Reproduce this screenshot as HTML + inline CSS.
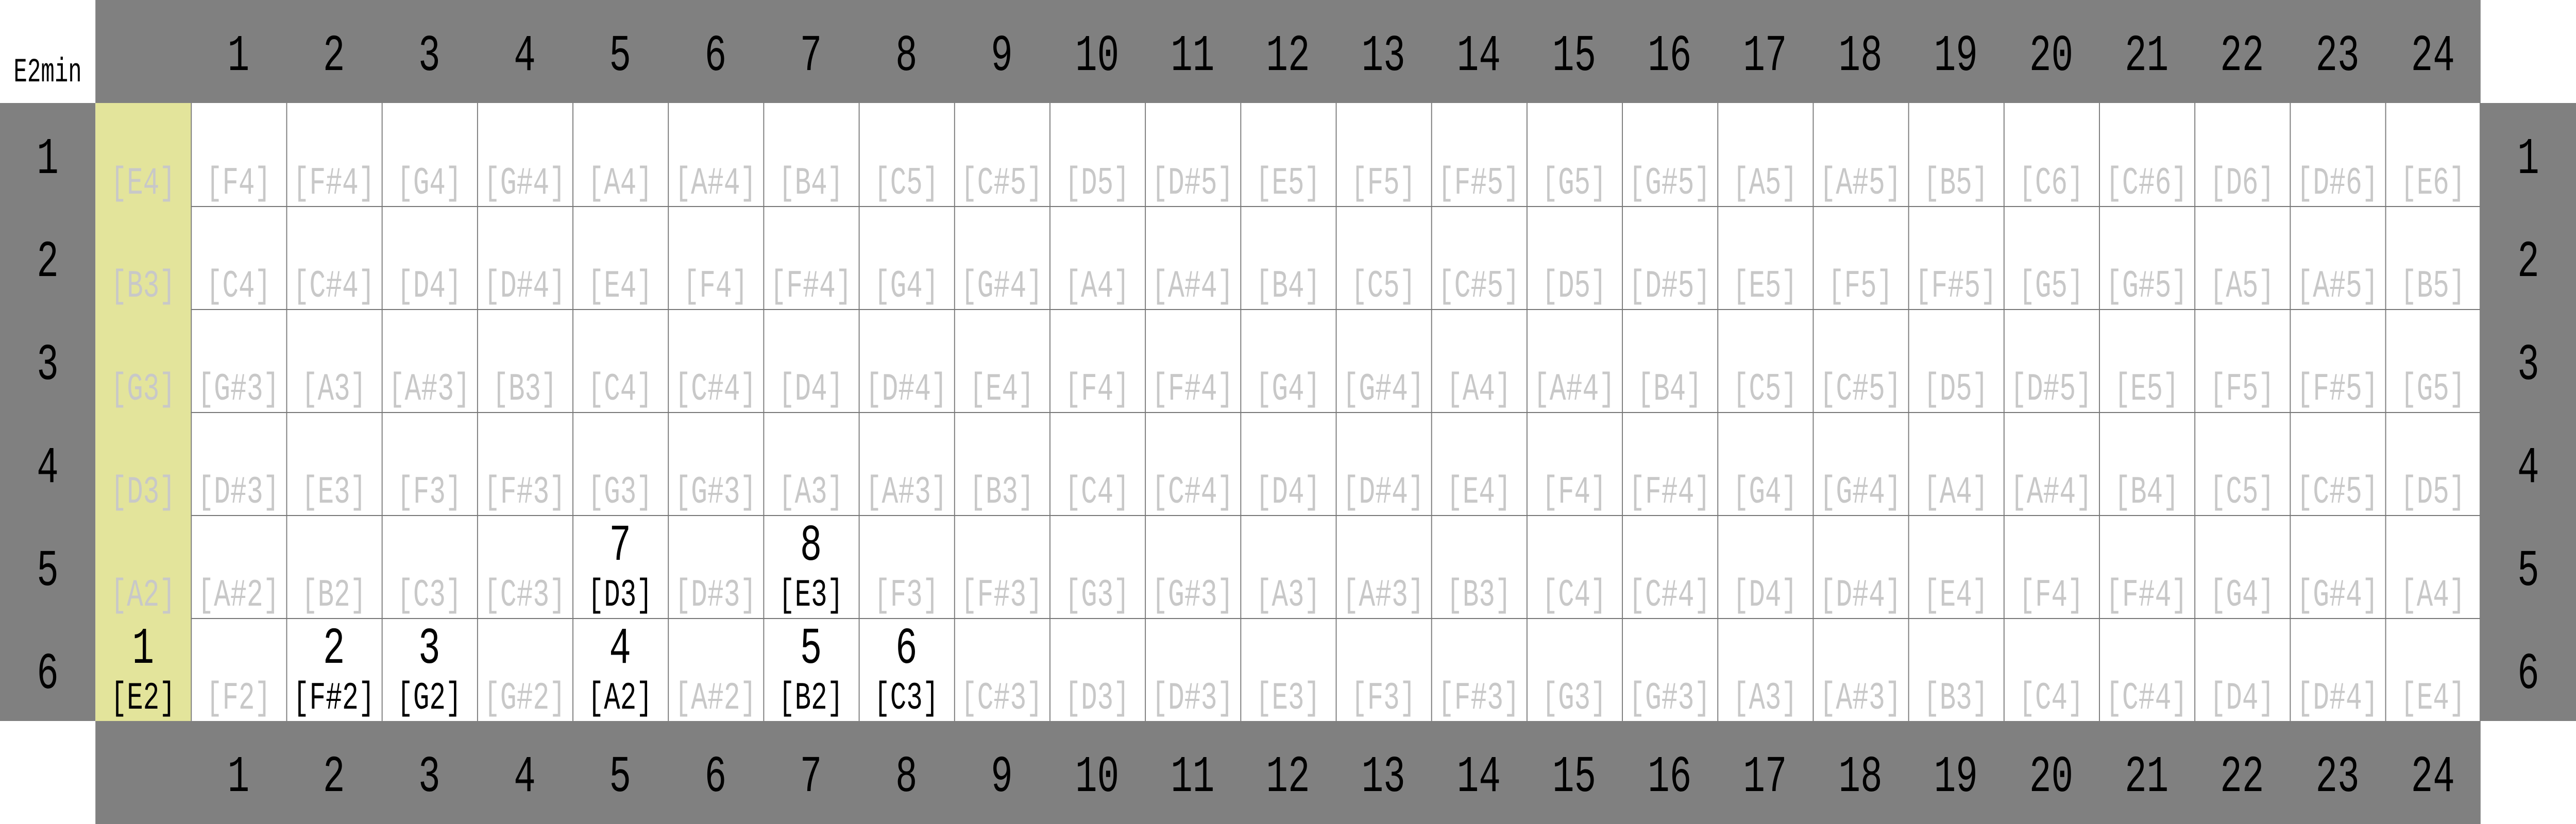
<!DOCTYPE html>
<html><head><meta charset="utf-8"><style>
*{margin:0;padding:0}
html,body{width:100%;height:100%;overflow:hidden;background:#fff}
svg{position:fixed;left:0;top:0;width:100vw;height:100vh;display:block}
text{font-family:"Liberation Mono",monospace;text-anchor:middle}
.L{font-size:100px;fill:#000}
.n{font-size:75px;fill:#c8c8c8}
.k{font-size:75px;fill:#000}
</style></head><body>
<svg viewBox="0 0 5400 1600" preserveAspectRatio="none" xmlns="http://www.w3.org/2000/svg">
<rect x="0" y="0" width="5400" height="1600" fill="#fff"/>
<rect x="200" y="0" width="5000" height="200" fill="#808080"/>
<rect x="200" y="1400" width="5000" height="200" fill="#808080"/>
<rect x="0" y="200" width="200" height="1200" fill="#808080"/>
<rect x="5200" y="200" width="200" height="1200" fill="#808080"/>
<rect x="200" y="200" width="200" height="1200" fill="#e3e49b"/>
<g stroke="#777" stroke-width="2">
<path d="M401 200V1400M601 200V1400M801 200V1400M1001 200V1400M1201 200V1400M1401 200V1400M1601 200V1400M1801 200V1400M2001 200V1400M2201 200V1400M2401 200V1400M2601 200V1400M2801 200V1400M3001 200V1400M3201 200V1400M3401 200V1400M3601 200V1400M3801 200V1400M4001 200V1400M4201 200V1400M4401 200V1400M4601 200V1400M4801 200V1400M5001 200V1400M5199 200V1400"/>
<path d="M400 401H5200M400 601H5200M400 801H5200M400 1001H5200M400 1201H5200"/>
</g>
<text x="100" y="158" font-size="66" textLength="143" lengthAdjust="spacingAndGlyphs">E2min</text>
<g class="L">
<text x="500" y="136" textLength="46" lengthAdjust="spacingAndGlyphs">1</text><text x="700" y="136" textLength="46" lengthAdjust="spacingAndGlyphs">2</text><text x="900" y="136" textLength="46" lengthAdjust="spacingAndGlyphs">3</text><text x="1100" y="136" textLength="46" lengthAdjust="spacingAndGlyphs">4</text><text x="1300" y="136" textLength="46" lengthAdjust="spacingAndGlyphs">5</text><text x="1500" y="136" textLength="46" lengthAdjust="spacingAndGlyphs">6</text><text x="1700" y="136" textLength="46" lengthAdjust="spacingAndGlyphs">7</text><text x="1900" y="136" textLength="46" lengthAdjust="spacingAndGlyphs">8</text><text x="2100" y="136" textLength="46" lengthAdjust="spacingAndGlyphs">9</text><text x="2300" y="136" textLength="92" lengthAdjust="spacingAndGlyphs">10</text><text x="2500" y="136" textLength="92" lengthAdjust="spacingAndGlyphs">11</text><text x="2700" y="136" textLength="92" lengthAdjust="spacingAndGlyphs">12</text><text x="2900" y="136" textLength="92" lengthAdjust="spacingAndGlyphs">13</text><text x="3100" y="136" textLength="92" lengthAdjust="spacingAndGlyphs">14</text><text x="3300" y="136" textLength="92" lengthAdjust="spacingAndGlyphs">15</text><text x="3500" y="136" textLength="92" lengthAdjust="spacingAndGlyphs">16</text><text x="3700" y="136" textLength="92" lengthAdjust="spacingAndGlyphs">17</text><text x="3900" y="136" textLength="92" lengthAdjust="spacingAndGlyphs">18</text><text x="4100" y="136" textLength="92" lengthAdjust="spacingAndGlyphs">19</text><text x="4300" y="136" textLength="92" lengthAdjust="spacingAndGlyphs">20</text><text x="4500" y="136" textLength="92" lengthAdjust="spacingAndGlyphs">21</text><text x="4700" y="136" textLength="92" lengthAdjust="spacingAndGlyphs">22</text><text x="4900" y="136" textLength="92" lengthAdjust="spacingAndGlyphs">23</text><text x="5100" y="136" textLength="92" lengthAdjust="spacingAndGlyphs">24</text>
<text x="500" y="1536" textLength="46" lengthAdjust="spacingAndGlyphs">1</text><text x="700" y="1536" textLength="46" lengthAdjust="spacingAndGlyphs">2</text><text x="900" y="1536" textLength="46" lengthAdjust="spacingAndGlyphs">3</text><text x="1100" y="1536" textLength="46" lengthAdjust="spacingAndGlyphs">4</text><text x="1300" y="1536" textLength="46" lengthAdjust="spacingAndGlyphs">5</text><text x="1500" y="1536" textLength="46" lengthAdjust="spacingAndGlyphs">6</text><text x="1700" y="1536" textLength="46" lengthAdjust="spacingAndGlyphs">7</text><text x="1900" y="1536" textLength="46" lengthAdjust="spacingAndGlyphs">8</text><text x="2100" y="1536" textLength="46" lengthAdjust="spacingAndGlyphs">9</text><text x="2300" y="1536" textLength="92" lengthAdjust="spacingAndGlyphs">10</text><text x="2500" y="1536" textLength="92" lengthAdjust="spacingAndGlyphs">11</text><text x="2700" y="1536" textLength="92" lengthAdjust="spacingAndGlyphs">12</text><text x="2900" y="1536" textLength="92" lengthAdjust="spacingAndGlyphs">13</text><text x="3100" y="1536" textLength="92" lengthAdjust="spacingAndGlyphs">14</text><text x="3300" y="1536" textLength="92" lengthAdjust="spacingAndGlyphs">15</text><text x="3500" y="1536" textLength="92" lengthAdjust="spacingAndGlyphs">16</text><text x="3700" y="1536" textLength="92" lengthAdjust="spacingAndGlyphs">17</text><text x="3900" y="1536" textLength="92" lengthAdjust="spacingAndGlyphs">18</text><text x="4100" y="1536" textLength="92" lengthAdjust="spacingAndGlyphs">19</text><text x="4300" y="1536" textLength="92" lengthAdjust="spacingAndGlyphs">20</text><text x="4500" y="1536" textLength="92" lengthAdjust="spacingAndGlyphs">21</text><text x="4700" y="1536" textLength="92" lengthAdjust="spacingAndGlyphs">22</text><text x="4900" y="1536" textLength="92" lengthAdjust="spacingAndGlyphs">23</text><text x="5100" y="1536" textLength="92" lengthAdjust="spacingAndGlyphs">24</text>
<text x="100" y="336" textLength="46" lengthAdjust="spacingAndGlyphs">1</text><text x="100" y="536" textLength="46" lengthAdjust="spacingAndGlyphs">2</text><text x="100" y="736" textLength="46" lengthAdjust="spacingAndGlyphs">3</text><text x="100" y="936" textLength="46" lengthAdjust="spacingAndGlyphs">4</text><text x="100" y="1136" textLength="46" lengthAdjust="spacingAndGlyphs">5</text><text x="100" y="1336" textLength="46" lengthAdjust="spacingAndGlyphs">6</text>
<text x="5300" y="336" textLength="46" lengthAdjust="spacingAndGlyphs">1</text><text x="5300" y="536" textLength="46" lengthAdjust="spacingAndGlyphs">2</text><text x="5300" y="736" textLength="46" lengthAdjust="spacingAndGlyphs">3</text><text x="5300" y="936" textLength="46" lengthAdjust="spacingAndGlyphs">4</text><text x="5300" y="1136" textLength="46" lengthAdjust="spacingAndGlyphs">5</text><text x="5300" y="1336" textLength="46" lengthAdjust="spacingAndGlyphs">6</text>
<text x="300" y="1287" textLength="46" lengthAdjust="spacingAndGlyphs">1</text><text x="700" y="1287" textLength="46" lengthAdjust="spacingAndGlyphs">2</text><text x="900" y="1287" textLength="46" lengthAdjust="spacingAndGlyphs">3</text><text x="1300" y="1287" textLength="46" lengthAdjust="spacingAndGlyphs">4</text><text x="1700" y="1287" textLength="46" lengthAdjust="spacingAndGlyphs">5</text><text x="1900" y="1287" textLength="46" lengthAdjust="spacingAndGlyphs">6</text>
<text x="1300" y="1087" textLength="46" lengthAdjust="spacingAndGlyphs">7</text><text x="1700" y="1087" textLength="46" lengthAdjust="spacingAndGlyphs">8</text>
</g>
<g class="k">
<text x="300" y="1376" textLength="136" lengthAdjust="spacingAndGlyphs">[E2]</text><text x="700" y="1376" textLength="172" lengthAdjust="spacingAndGlyphs">[F#2]</text><text x="900" y="1376" textLength="136" lengthAdjust="spacingAndGlyphs">[G2]</text><text x="1300" y="1376" textLength="136" lengthAdjust="spacingAndGlyphs">[A2]</text><text x="1700" y="1376" textLength="136" lengthAdjust="spacingAndGlyphs">[B2]</text><text x="1900" y="1376" textLength="136" lengthAdjust="spacingAndGlyphs">[C3]</text>
<text x="1300" y="1176" textLength="136" lengthAdjust="spacingAndGlyphs">[D3]</text><text x="1700" y="1176" textLength="136" lengthAdjust="spacingAndGlyphs">[E3]</text>
</g>
<g class="n">
<text x="300" y="376" textLength="136" lengthAdjust="spacingAndGlyphs">[E4]</text><text x="500" y="376" textLength="136" lengthAdjust="spacingAndGlyphs">[F4]</text><text x="700" y="376" textLength="172" lengthAdjust="spacingAndGlyphs">[F#4]</text><text x="900" y="376" textLength="136" lengthAdjust="spacingAndGlyphs">[G4]</text><text x="1100" y="376" textLength="172" lengthAdjust="spacingAndGlyphs">[G#4]</text><text x="1300" y="376" textLength="136" lengthAdjust="spacingAndGlyphs">[A4]</text><text x="1500" y="376" textLength="172" lengthAdjust="spacingAndGlyphs">[A#4]</text><text x="1700" y="376" textLength="136" lengthAdjust="spacingAndGlyphs">[B4]</text><text x="1900" y="376" textLength="136" lengthAdjust="spacingAndGlyphs">[C5]</text><text x="2100" y="376" textLength="172" lengthAdjust="spacingAndGlyphs">[C#5]</text><text x="2300" y="376" textLength="136" lengthAdjust="spacingAndGlyphs">[D5]</text><text x="2500" y="376" textLength="172" lengthAdjust="spacingAndGlyphs">[D#5]</text><text x="2700" y="376" textLength="136" lengthAdjust="spacingAndGlyphs">[E5]</text><text x="2900" y="376" textLength="136" lengthAdjust="spacingAndGlyphs">[F5]</text><text x="3100" y="376" textLength="172" lengthAdjust="spacingAndGlyphs">[F#5]</text><text x="3300" y="376" textLength="136" lengthAdjust="spacingAndGlyphs">[G5]</text><text x="3500" y="376" textLength="172" lengthAdjust="spacingAndGlyphs">[G#5]</text><text x="3700" y="376" textLength="136" lengthAdjust="spacingAndGlyphs">[A5]</text><text x="3900" y="376" textLength="172" lengthAdjust="spacingAndGlyphs">[A#5]</text><text x="4100" y="376" textLength="136" lengthAdjust="spacingAndGlyphs">[B5]</text><text x="4300" y="376" textLength="136" lengthAdjust="spacingAndGlyphs">[C6]</text><text x="4500" y="376" textLength="172" lengthAdjust="spacingAndGlyphs">[C#6]</text><text x="4700" y="376" textLength="136" lengthAdjust="spacingAndGlyphs">[D6]</text><text x="4900" y="376" textLength="172" lengthAdjust="spacingAndGlyphs">[D#6]</text><text x="5100" y="376" textLength="136" lengthAdjust="spacingAndGlyphs">[E6]</text>

<text x="300" y="576" textLength="136" lengthAdjust="spacingAndGlyphs">[B3]</text><text x="500" y="576" textLength="136" lengthAdjust="spacingAndGlyphs">[C4]</text><text x="700" y="576" textLength="172" lengthAdjust="spacingAndGlyphs">[C#4]</text><text x="900" y="576" textLength="136" lengthAdjust="spacingAndGlyphs">[D4]</text><text x="1100" y="576" textLength="172" lengthAdjust="spacingAndGlyphs">[D#4]</text><text x="1300" y="576" textLength="136" lengthAdjust="spacingAndGlyphs">[E4]</text><text x="1500" y="576" textLength="136" lengthAdjust="spacingAndGlyphs">[F4]</text><text x="1700" y="576" textLength="172" lengthAdjust="spacingAndGlyphs">[F#4]</text><text x="1900" y="576" textLength="136" lengthAdjust="spacingAndGlyphs">[G4]</text><text x="2100" y="576" textLength="172" lengthAdjust="spacingAndGlyphs">[G#4]</text><text x="2300" y="576" textLength="136" lengthAdjust="spacingAndGlyphs">[A4]</text><text x="2500" y="576" textLength="172" lengthAdjust="spacingAndGlyphs">[A#4]</text><text x="2700" y="576" textLength="136" lengthAdjust="spacingAndGlyphs">[B4]</text><text x="2900" y="576" textLength="136" lengthAdjust="spacingAndGlyphs">[C5]</text><text x="3100" y="576" textLength="172" lengthAdjust="spacingAndGlyphs">[C#5]</text><text x="3300" y="576" textLength="136" lengthAdjust="spacingAndGlyphs">[D5]</text><text x="3500" y="576" textLength="172" lengthAdjust="spacingAndGlyphs">[D#5]</text><text x="3700" y="576" textLength="136" lengthAdjust="spacingAndGlyphs">[E5]</text><text x="3900" y="576" textLength="136" lengthAdjust="spacingAndGlyphs">[F5]</text><text x="4100" y="576" textLength="172" lengthAdjust="spacingAndGlyphs">[F#5]</text><text x="4300" y="576" textLength="136" lengthAdjust="spacingAndGlyphs">[G5]</text><text x="4500" y="576" textLength="172" lengthAdjust="spacingAndGlyphs">[G#5]</text><text x="4700" y="576" textLength="136" lengthAdjust="spacingAndGlyphs">[A5]</text><text x="4900" y="576" textLength="172" lengthAdjust="spacingAndGlyphs">[A#5]</text><text x="5100" y="576" textLength="136" lengthAdjust="spacingAndGlyphs">[B5]</text>

<text x="300" y="776" textLength="136" lengthAdjust="spacingAndGlyphs">[G3]</text><text x="500" y="776" textLength="172" lengthAdjust="spacingAndGlyphs">[G#3]</text><text x="700" y="776" textLength="136" lengthAdjust="spacingAndGlyphs">[A3]</text><text x="900" y="776" textLength="172" lengthAdjust="spacingAndGlyphs">[A#3]</text><text x="1100" y="776" textLength="136" lengthAdjust="spacingAndGlyphs">[B3]</text><text x="1300" y="776" textLength="136" lengthAdjust="spacingAndGlyphs">[C4]</text><text x="1500" y="776" textLength="172" lengthAdjust="spacingAndGlyphs">[C#4]</text><text x="1700" y="776" textLength="136" lengthAdjust="spacingAndGlyphs">[D4]</text><text x="1900" y="776" textLength="172" lengthAdjust="spacingAndGlyphs">[D#4]</text><text x="2100" y="776" textLength="136" lengthAdjust="spacingAndGlyphs">[E4]</text><text x="2300" y="776" textLength="136" lengthAdjust="spacingAndGlyphs">[F4]</text><text x="2500" y="776" textLength="172" lengthAdjust="spacingAndGlyphs">[F#4]</text><text x="2700" y="776" textLength="136" lengthAdjust="spacingAndGlyphs">[G4]</text><text x="2900" y="776" textLength="172" lengthAdjust="spacingAndGlyphs">[G#4]</text><text x="3100" y="776" textLength="136" lengthAdjust="spacingAndGlyphs">[A4]</text><text x="3300" y="776" textLength="172" lengthAdjust="spacingAndGlyphs">[A#4]</text><text x="3500" y="776" textLength="136" lengthAdjust="spacingAndGlyphs">[B4]</text><text x="3700" y="776" textLength="136" lengthAdjust="spacingAndGlyphs">[C5]</text><text x="3900" y="776" textLength="172" lengthAdjust="spacingAndGlyphs">[C#5]</text><text x="4100" y="776" textLength="136" lengthAdjust="spacingAndGlyphs">[D5]</text><text x="4300" y="776" textLength="172" lengthAdjust="spacingAndGlyphs">[D#5]</text><text x="4500" y="776" textLength="136" lengthAdjust="spacingAndGlyphs">[E5]</text><text x="4700" y="776" textLength="136" lengthAdjust="spacingAndGlyphs">[F5]</text><text x="4900" y="776" textLength="172" lengthAdjust="spacingAndGlyphs">[F#5]</text><text x="5100" y="776" textLength="136" lengthAdjust="spacingAndGlyphs">[G5]</text>

<text x="300" y="976" textLength="136" lengthAdjust="spacingAndGlyphs">[D3]</text><text x="500" y="976" textLength="172" lengthAdjust="spacingAndGlyphs">[D#3]</text><text x="700" y="976" textLength="136" lengthAdjust="spacingAndGlyphs">[E3]</text><text x="900" y="976" textLength="136" lengthAdjust="spacingAndGlyphs">[F3]</text><text x="1100" y="976" textLength="172" lengthAdjust="spacingAndGlyphs">[F#3]</text><text x="1300" y="976" textLength="136" lengthAdjust="spacingAndGlyphs">[G3]</text><text x="1500" y="976" textLength="172" lengthAdjust="spacingAndGlyphs">[G#3]</text><text x="1700" y="976" textLength="136" lengthAdjust="spacingAndGlyphs">[A3]</text><text x="1900" y="976" textLength="172" lengthAdjust="spacingAndGlyphs">[A#3]</text><text x="2100" y="976" textLength="136" lengthAdjust="spacingAndGlyphs">[B3]</text><text x="2300" y="976" textLength="136" lengthAdjust="spacingAndGlyphs">[C4]</text><text x="2500" y="976" textLength="172" lengthAdjust="spacingAndGlyphs">[C#4]</text><text x="2700" y="976" textLength="136" lengthAdjust="spacingAndGlyphs">[D4]</text><text x="2900" y="976" textLength="172" lengthAdjust="spacingAndGlyphs">[D#4]</text><text x="3100" y="976" textLength="136" lengthAdjust="spacingAndGlyphs">[E4]</text><text x="3300" y="976" textLength="136" lengthAdjust="spacingAndGlyphs">[F4]</text><text x="3500" y="976" textLength="172" lengthAdjust="spacingAndGlyphs">[F#4]</text><text x="3700" y="976" textLength="136" lengthAdjust="spacingAndGlyphs">[G4]</text><text x="3900" y="976" textLength="172" lengthAdjust="spacingAndGlyphs">[G#4]</text><text x="4100" y="976" textLength="136" lengthAdjust="spacingAndGlyphs">[A4]</text><text x="4300" y="976" textLength="172" lengthAdjust="spacingAndGlyphs">[A#4]</text><text x="4500" y="976" textLength="136" lengthAdjust="spacingAndGlyphs">[B4]</text><text x="4700" y="976" textLength="136" lengthAdjust="spacingAndGlyphs">[C5]</text><text x="4900" y="976" textLength="172" lengthAdjust="spacingAndGlyphs">[C#5]</text><text x="5100" y="976" textLength="136" lengthAdjust="spacingAndGlyphs">[D5]</text>

<text x="300" y="1176" textLength="136" lengthAdjust="spacingAndGlyphs">[A2]</text><text x="500" y="1176" textLength="172" lengthAdjust="spacingAndGlyphs">[A#2]</text><text x="700" y="1176" textLength="136" lengthAdjust="spacingAndGlyphs">[B2]</text><text x="900" y="1176" textLength="136" lengthAdjust="spacingAndGlyphs">[C3]</text><text x="1100" y="1176" textLength="172" lengthAdjust="spacingAndGlyphs">[C#3]</text><text x="1500" y="1176" textLength="172" lengthAdjust="spacingAndGlyphs">[D#3]</text><text x="1900" y="1176" textLength="136" lengthAdjust="spacingAndGlyphs">[F3]</text><text x="2100" y="1176" textLength="172" lengthAdjust="spacingAndGlyphs">[F#3]</text><text x="2300" y="1176" textLength="136" lengthAdjust="spacingAndGlyphs">[G3]</text><text x="2500" y="1176" textLength="172" lengthAdjust="spacingAndGlyphs">[G#3]</text><text x="2700" y="1176" textLength="136" lengthAdjust="spacingAndGlyphs">[A3]</text><text x="2900" y="1176" textLength="172" lengthAdjust="spacingAndGlyphs">[A#3]</text><text x="3100" y="1176" textLength="136" lengthAdjust="spacingAndGlyphs">[B3]</text><text x="3300" y="1176" textLength="136" lengthAdjust="spacingAndGlyphs">[C4]</text><text x="3500" y="1176" textLength="172" lengthAdjust="spacingAndGlyphs">[C#4]</text><text x="3700" y="1176" textLength="136" lengthAdjust="spacingAndGlyphs">[D4]</text><text x="3900" y="1176" textLength="172" lengthAdjust="spacingAndGlyphs">[D#4]</text><text x="4100" y="1176" textLength="136" lengthAdjust="spacingAndGlyphs">[E4]</text><text x="4300" y="1176" textLength="136" lengthAdjust="spacingAndGlyphs">[F4]</text><text x="4500" y="1176" textLength="172" lengthAdjust="spacingAndGlyphs">[F#4]</text><text x="4700" y="1176" textLength="136" lengthAdjust="spacingAndGlyphs">[G4]</text><text x="4900" y="1176" textLength="172" lengthAdjust="spacingAndGlyphs">[G#4]</text><text x="5100" y="1176" textLength="136" lengthAdjust="spacingAndGlyphs">[A4]</text>

<text x="500" y="1376" textLength="136" lengthAdjust="spacingAndGlyphs">[F2]</text><text x="1100" y="1376" textLength="172" lengthAdjust="spacingAndGlyphs">[G#2]</text><text x="1500" y="1376" textLength="172" lengthAdjust="spacingAndGlyphs">[A#2]</text><text x="2100" y="1376" textLength="172" lengthAdjust="spacingAndGlyphs">[C#3]</text><text x="2300" y="1376" textLength="136" lengthAdjust="spacingAndGlyphs">[D3]</text><text x="2500" y="1376" textLength="172" lengthAdjust="spacingAndGlyphs">[D#3]</text><text x="2700" y="1376" textLength="136" lengthAdjust="spacingAndGlyphs">[E3]</text><text x="2900" y="1376" textLength="136" lengthAdjust="spacingAndGlyphs">[F3]</text><text x="3100" y="1376" textLength="172" lengthAdjust="spacingAndGlyphs">[F#3]</text><text x="3300" y="1376" textLength="136" lengthAdjust="spacingAndGlyphs">[G3]</text><text x="3500" y="1376" textLength="172" lengthAdjust="spacingAndGlyphs">[G#3]</text><text x="3700" y="1376" textLength="136" lengthAdjust="spacingAndGlyphs">[A3]</text><text x="3900" y="1376" textLength="172" lengthAdjust="spacingAndGlyphs">[A#3]</text><text x="4100" y="1376" textLength="136" lengthAdjust="spacingAndGlyphs">[B3]</text><text x="4300" y="1376" textLength="136" lengthAdjust="spacingAndGlyphs">[C4]</text><text x="4500" y="1376" textLength="172" lengthAdjust="spacingAndGlyphs">[C#4]</text><text x="4700" y="1376" textLength="136" lengthAdjust="spacingAndGlyphs">[D4]</text><text x="4900" y="1376" textLength="172" lengthAdjust="spacingAndGlyphs">[D#4]</text><text x="5100" y="1376" textLength="136" lengthAdjust="spacingAndGlyphs">[E4]</text>
</g>
</svg>
</body></html>
